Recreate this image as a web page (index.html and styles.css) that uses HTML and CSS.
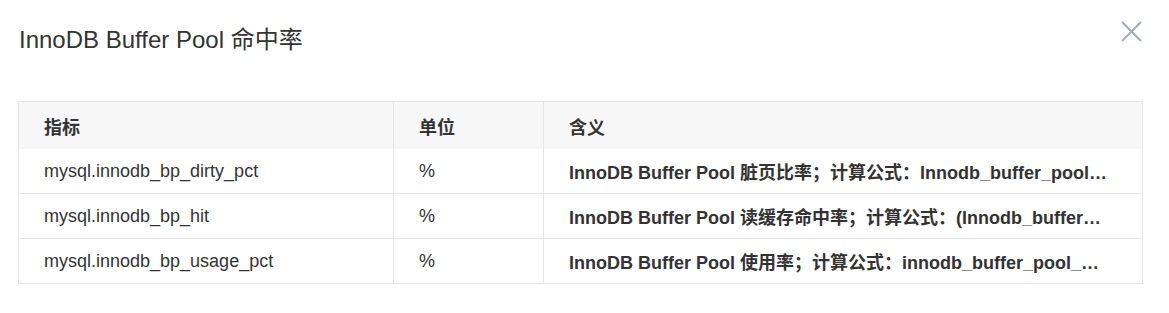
FILE: index.html
```html
<!DOCTYPE html>
<html lang="zh-CN">
<head>
<meta charset="utf-8">
<title>InnoDB Buffer Pool 命中率</title>
<link rel="stylesheet" href="styles.css">
</head>
<body>
<div class="dialog">
  <div class="dialog-header">
    <h1 class="dialog-title">InnoDB Buffer Pool 命中率</h1>
    <button class="close" aria-label="关闭">
      <svg viewBox="0 0 20 20" width="21" height="21"><path d="M1 1L19 19M19 1L1 19" stroke="#a3aeb5" stroke-width="2" fill="none"/></svg>
    </button>
  </div>
  <table class="metrics">
    <colgroup>
      <col class="c1"><col class="c2"><col class="c3">
    </colgroup>
    <thead>
      <tr><th>指标</th><th>单位</th><th>含义</th></tr>
    </thead>
    <tbody>
      <tr>
        <td>mysql.innodb_bp_dirty_pct</td>
        <td>%</td>
        <td class="desc"><div class="ell" title="InnoDB Buffer Pool 脏页比率；计算公式：Innodb_buffer_pool_pages_dirty / Innodb_buffer_pool_pages_total * 100">InnoDB Buffer Pool 脏页比率；计算公式：Innodb_buffer_pool_pages_dirty / Innodb_buffer_pool_pages_total * 100</div></td>
      </tr>
      <tr>
        <td>mysql.innodb_bp_hit</td>
        <td>%</td>
        <td class="desc"><div class="ell" title="InnoDB Buffer Pool 读缓存命中率；计算公式：(Innodb_buffer_pool_read_requests - Innodb_buffer_pool_reads) / Innodb_buffer_pool_read_requests * 100">InnoDB Buffer Pool 读缓存命中率；计算公式：(Innodb_buffer_pool_read_requests - Innodb_buffer_pool_reads) / Innodb_buffer_pool_read_requests * 100</div></td>
      </tr>
      <tr>
        <td>mysql.innodb_bp_usage_pct</td>
        <td>%</td>
        <td class="desc"><div class="ell" title="InnoDB Buffer Pool 使用率；计算公式：innodb_buffer_pool_pages_data / innodb_buffer_pool_pages_total * 100">InnoDB Buffer Pool 使用率；计算公式：innodb_buffer_pool_pages_data / innodb_buffer_pool_pages_total * 100</div></td>
      </tr>
    </tbody>
  </table>
</div>
</body>
</html>
```
FILE: styles.css
```css
html, body {
  margin: 0;
  padding: 0;
  background: #ffffff;
}
body {
  font-family: "Liberation Sans", Arial, "Noto Sans CJK SC", sans-serif;
  color: #333333;
}
.dialog {
  padding: 0 26px 0 18px;
}
.dialog-header {
  display: flex;
  align-items: flex-start;
  justify-content: space-between;
  height: 101px;
}
.dialog-title {
  margin: 24px 0 0 1px;
  font-size: 24px;
  line-height: 32px;
  font-weight: normal;
  color: #333333;
}
.close {
  margin: 21px 1px 0 0;
  padding: 0;
  border: 0;
  background: none;
  width: 21px;
  height: 21px;
  cursor: pointer;
}
.close svg {
  display: block;
}
.metrics {
  width: 100%;
  table-layout: fixed;
  border-collapse: collapse;
  border: 1px solid #e6e6e6;
  font-size: 18px;
}
.c1 { width: 375px; }
.c2 { width: 150px; }
.metrics th,
.metrics td {
  padding: 0 25px;
  text-align: left;
  border-left: 1px solid #e6e6e6;
  white-space: nowrap;
  overflow: hidden;
}
.metrics th {
  height: 47px;
  background: #f7f7f7;
  font-weight: bold;
  color: #333333;
}
.metrics td {
  height: 44px;
  border-top: 1px solid #e6e6e6;
  color: #333333;
}
.metrics tbody tr:first-child td {
  border-top: 0;
}
.metrics td.desc {
  font-weight: bold;
  padding-right: 35px;
}
.ell {
  overflow: hidden;
  text-overflow: ellipsis;
  white-space: nowrap;
}
```
